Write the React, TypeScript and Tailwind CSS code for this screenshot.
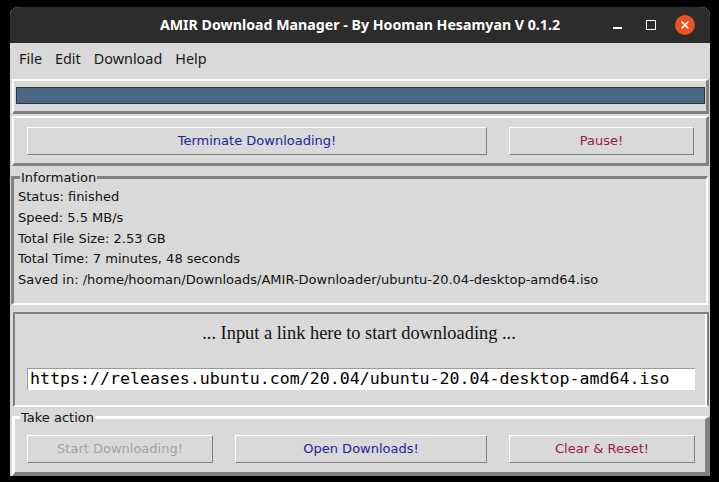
const Btn = ({ label, color, width }: { label: string; color: string; width: string }) => {
  return (
    <div
      className={`${width} h-[28px] flex items-center justify-center border border-t-white border-l-white border-r-[#808080] border-b-[#808080] text-[13px] ${color}`}
    >
      {label}
    </div>
  );
};

const App = () => {
  const info = [
    "Status: finished",
    "Speed: 5.5 MB/s",
    "Total File Size: 2.53 GB",
    "Total Time: 7 minutes, 48 seconds",
    "Saved in: /home/hooman/Downloads/AMIR-Downloader/ubuntu-20.04-desktop-amd64.iso",
  ];

  return (
    <div className="w-[719px] h-[482px] bg-black pt-[7px] pl-[10px] overflow-hidden font-['DejaVu_Sans',sans-serif]">
      <div className="w-[700px] h-[469px] bg-[#d9d9d9] flex flex-col rounded-t-[8px]">
        {/* title bar */}
        <div className="h-[36px] bg-[#2c2c2c] rounded-t-[8px] flex items-center relative">
          <div className="flex-1 text-center text-white font-bold text-[14.2px] font-['Noto_Sans',sans-serif]">
            AMIR Download Manager - By Hooman Hesamyan V 0.1.2
          </div>
          <div className="absolute right-[8px] top-0 h-[36px] flex items-center">
            <div className="w-[34px] flex justify-center items-center h-full">
              <div className="w-[9px] h-[2px] bg-white mt-[6px]"></div>
            </div>
            <div className="w-[34px] flex justify-center items-center h-full">
              <div className="w-[10px] h-[10px] border-[1.5px] border-white"></div>
            </div>
            <div className="w-[34px] flex justify-center items-center h-full">
              <div className="w-[20px] h-[20px] rounded-full bg-[#e95420] flex items-center justify-center">
                <svg width="10" height="10" viewBox="0 0 10 10">
                  <path d="M1.5 1.5 L8.5 8.5 M8.5 1.5 L1.5 8.5" stroke="white" strokeWidth="1.6" />
                </svg>
              </div>
            </div>
          </div>
        </div>

        {/* menu */}
        <div className="h-[31px] flex items-center pl-[9px] gap-[13px] text-[14.4px] text-[#1a1a1a] font-['Noto_Sans',sans-serif]">
          <span>File</span>
          <span>Edit</span>
          <span>Download</span>
          <span>Help</span>
        </div>

        {/* progress */}
        <div className="mt-[5px] ml-[2px] mr-[1px] h-[35px] border-t-2 border-l-2 border-t-white border-l-white border-b-[3px] border-r-[3px] border-b-[#808080] border-r-[#808080] pt-[6px] pl-[2px] pr-[1px]">
          <div className="h-[17px] bg-[#4a6984] border border-[#333]"></div>
        </div>

        {/* control buttons */}
        <div className="mt-[2px] ml-[2px] mr-[1px] h-[50px] border-t-2 border-l-2 border-t-white border-l-white border-b-[3px] border-r-[3px] border-b-[#808080] border-r-[#808080] pt-[9px] pl-[13px] pr-[12px] flex gap-[22px]">
          <Btn label="Terminate Downloading!" color="text-[#23239b]" width="w-[460px]" />
          <Btn label="Pause!" color="text-[#9a1a48]" width="w-[185px]" />
        </div>

        {/* information */}
        <div className="relative mt-[10px] ml-[1px] mr-[2px] h-[129px] border-t-[3px] border-l-[3px] border-t-[#808080] border-l-[#808080] border-b-2 border-r-2 border-b-white border-r-white pt-[8px] pl-[4px] text-[13px] text-[#111]">
          <div className="absolute left-[6px] top-[-9px] bg-[#d9d9d9] px-[1px] leading-[16px]">Information</div>
          {info.map((line) => (
            <div key={line} className="h-[20.75px] leading-[20.75px] whitespace-nowrap">
              {line}
            </div>
          ))}
        </div>

        {/* link input */}
        <div className="mt-[7px] ml-[3px] mr-[1px] h-[95px] border-t-2 border-l-2 border-r-2 border-t-[#808080] border-l-[#808080] border-r-[#808080] border-b-2 border-b-white shadow-[inset_-2px_0_0_white] pt-[8px] flex flex-col items-center">
          <div className="text-[18.4px] leading-[22px] text-[#111] font-['Liberation_Serif',serif] ml-[-4px]">
            ... Input a link here to start downloading ...
          </div>
          <div className="mt-[24px] ml-[12px] mr-[12px] self-stretch h-[22px] bg-white border-t border-l border-[#9a9a9a] flex items-center pl-[2px] text-[16.6px] text-black font-['DejaVu_Sans_Mono',monospace] whitespace-nowrap overflow-hidden">
            https://releases.ubuntu.com/20.04/ubuntu-20.04-desktop-amd64.iso
          </div>
        </div>

        {/* take action */}
        <div className="relative mt-[9px] ml-[2px] h-[60px] border-t-[3px] border-l-[3px] border-t-white border-l-white border-b-[4px] border-r-[5px] border-b-[#808080] border-r-[#808080] pt-[16px] pl-[12px] flex gap-[22px]">
          <div className="absolute left-[5px] top-[-9px] bg-[#d9d9d9] px-[1px] leading-[16px] text-[13px] text-[#111]">Take action</div>
          <Btn label="Start Downloading!" color="text-[#a3a3a3]" width="w-[186px]" />
          <Btn label="Open Downloads!" color="text-[#23239b]" width="w-[252px]" />
          <Btn label="Clear & Reset!" color="text-[#9a1a48]" width="w-[186px]" />
        </div>
      </div>
    </div>
  );
};

export default App;
